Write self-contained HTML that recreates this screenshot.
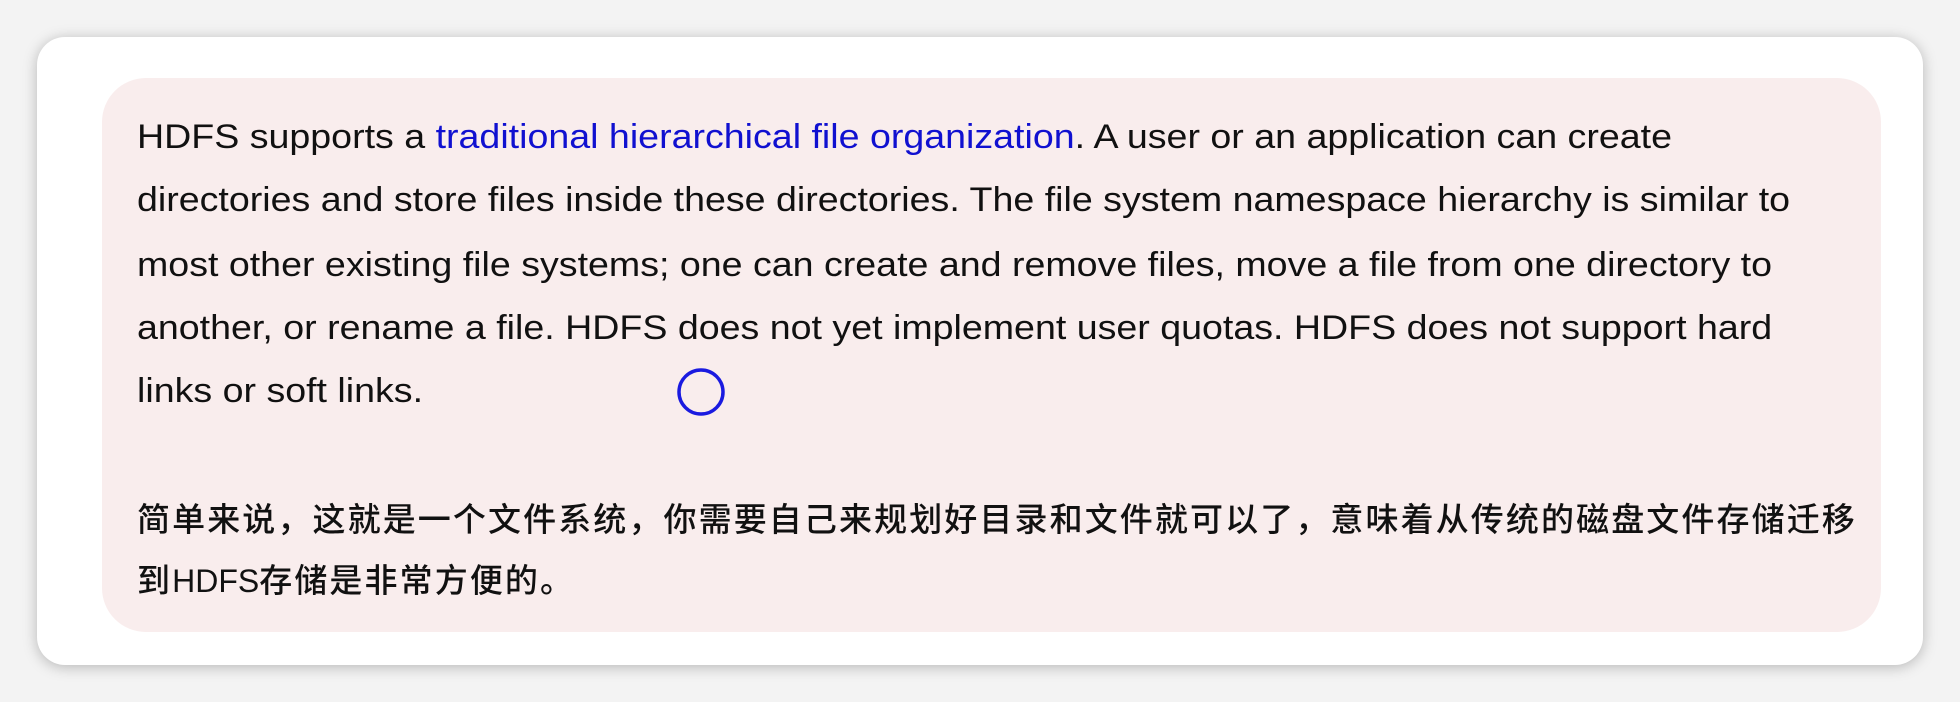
<!DOCTYPE html>
<html><head><meta charset="utf-8"><style>
html,body{margin:0;padding:0;}
body{width:1960px;height:702px;background:#f3f3f3;position:relative;overflow:hidden;}
.card{position:absolute;left:37px;top:37px;width:1886px;height:628px;background:#fff;border-radius:28px;box-shadow:0 2px 14px rgba(0,0,0,0.25);}
.pink{position:absolute;left:102px;top:78px;width:1779px;height:554px;background:#f9eded;border-radius:44px;}
.l{position:absolute;left:137px;white-space:nowrap;font-family:"Liberation Sans",sans-serif;font-size:34px;color:#111;line-height:40px;transform:scaleX(1.105);transform-origin:0 0;}
.c{position:absolute;left:137px;white-space:nowrap;font-family:"Liberation Sans","Noto Sans CJK SC",sans-serif;font-size:33px;letter-spacing:2.1px;color:#111;line-height:40px;font-weight:500;}
.c span{letter-spacing:0;font-size:32px;}
a{color:#1010d0;text-decoration:none;}
</style></head><body>
<div class="card"></div>
<div class="pink"></div>
<div class="l" style="top:117px">HDFS supports a <a>traditional hierarchical file organization</a>. A user or an application can create</div>
<div class="l" style="top:180px">directories and store files inside these directories. The file system namespace hierarchy is similar to</div>
<div class="l" style="top:245px">most other existing file systems; one can create and remove files, move a file from one directory to</div>
<div class="l" style="top:308px">another, or rename a file. HDFS does not yet implement user quotas. HDFS does not support hard</div>
<div class="l" style="top:371px">links or soft links.</div>
<div class="c" style="top:500px">简单来说，这就是一个文件系统，你需要自己来规划好目录和文件就可以了，意味着从传统的磁盘文件存储迁移</div>
<div class="c" style="top:561px">到<span>HDFS</span>存储是非常方便的。</div>
<svg style="position:absolute;left:0;top:0" width="1960" height="702"><circle cx="701" cy="392" r="22" fill="none" stroke="#1a1ae0" stroke-width="3.5"/></svg>
</body></html>
